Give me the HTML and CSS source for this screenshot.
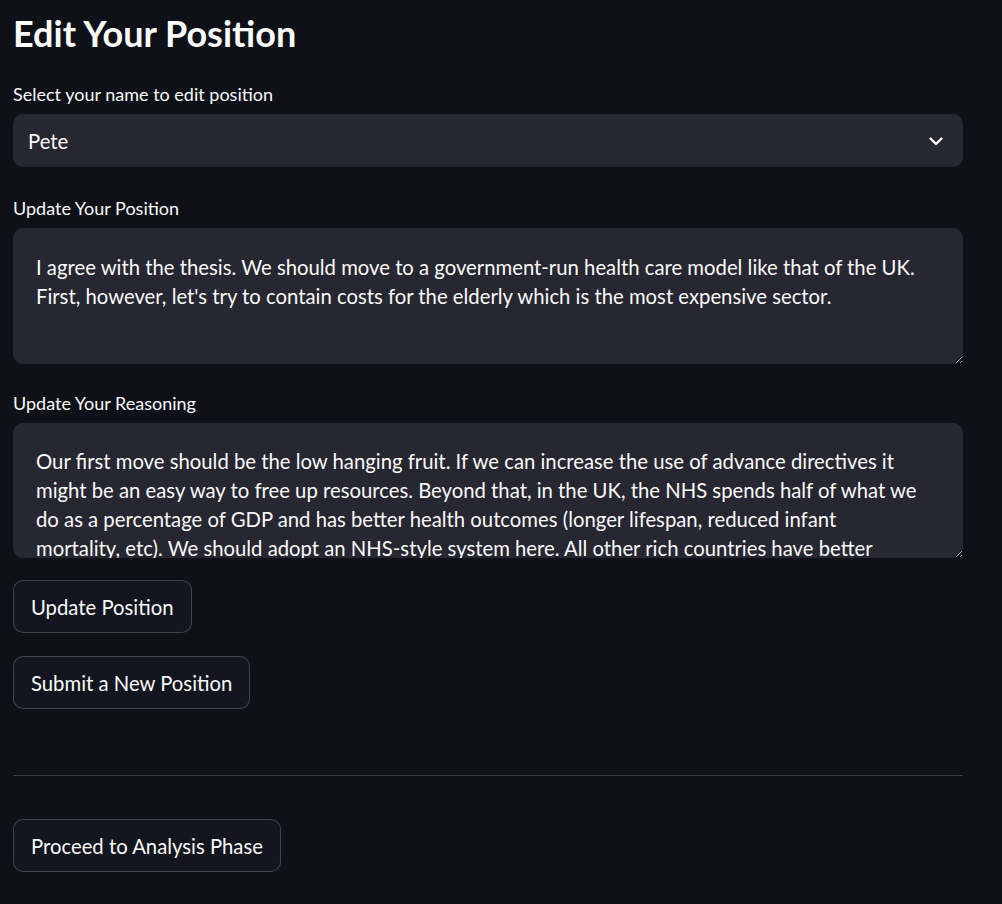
FILE: index.html
```html
<!DOCTYPE html>
<html lang="en">
<head>
<meta charset="utf-8">
<title>Edit Your Position</title>
<link rel="stylesheet" href="styles.css">
</head>
<body>
<main class="main">
  <h1 class="title">Edit Your Position</h1>

  <div class="field field-first">
    <label class="label">Select your name to edit position</label>
    <div class="select">
      <span class="select-value">Pete</span>
      <svg class="chevron" width="16" height="16" viewBox="0 0 16 16" aria-hidden="true">
        <path d="M2.5 5.5 L8 11 L13.5 5.5" fill="none" stroke="#fafafa" stroke-width="2.4" stroke-linecap="round" stroke-linejoin="round"/>
      </svg>
    </div>
  </div>

  <div class="field field-position">
    <label class="label">Update Your Position</label>
    <textarea class="textarea ta-position" readonly>I agree with the thesis. We should move to a government-run health care model like that of the UK. First, however, let's try to contain costs for the elderly which is the most expensive sector.</textarea>
  </div>

  <div class="field field-reasoning">
    <label class="label">Update Your Reasoning</label>
    <textarea class="textarea ta-reasoning" readonly>Our first move should be the low hanging fruit. If we can increase the use of advance directives it might be an easy way to free up resources. Beyond that, in the UK, the NHS spends half of what we do as a percentage of GDP and has better health outcomes (longer lifespan, reduced infant mortality, etc). We should adopt an NHS-style system here. All other rich countries have better health outcomes than we do at a lower cost.</textarea>
  </div>

  <button class="btn btn-first">Update Position</button>
  <button class="btn btn-second">Submit a New Position</button>

  <hr class="divider">

  <button class="btn btn-proceed">Proceed to Analysis Phase</button>
</main>
</body>
</html>
```

FILE: styles.css
```css
html, body {
  margin: 0;
  padding: 0;
  background: #0e1117;
  color: #fafafa;
  font-family: Lato, "Noto Sans", sans-serif;
}

.main {
  width: 950px;
  padding: 10px 0 0 13px;
  display: flex;
  flex-direction: column;
  align-items: flex-start;
}

.title {
  margin: 0;
  font-size: 36px;
  font-weight: 700;
  line-height: 46px;
}

.field {
  width: 100%;
  display: flex;
  flex-direction: column;
}

.field-first {
  margin-top: 27px;
}

.field-position {
  margin-top: 30px;
}

.field-reasoning {
  margin-top: 28px;
}

.label {
  font-size: 18px;
  line-height: 22px;
  margin-bottom: 9px;
}

.select {
  box-sizing: border-box;
  height: 53px;
  background: #262730;
  border-radius: 10px;
  display: flex;
  align-items: center;
  justify-content: space-between;
  padding: 0 19px 0 15px;
  font-size: 20.3px;
}

.chevron {
  display: block;
}

.textarea {
  box-sizing: border-box;
  width: 100%;
  background: #262730;
  color: #fafafa;
  border: none;
  outline: none;
  border-radius: 10px;
  font-family: inherit;
  font-size: 20.3px;
  line-height: 29px;
  padding: 25px 42px 0 23px;
  resize: vertical;
  overflow: hidden;
  margin: 0;
  display: block;
}

.ta-position {
  height: 136px;
}

.ta-reasoning {
  height: 135px;
  padding-top: 24px;
}

.btn {
  box-sizing: border-box;
  height: 53px;
  padding: 0 17px;
  background: #13161e;
  color: #fafafa;
  border: 1px solid rgba(250, 250, 250, 0.2);
  border-radius: 10px;
  font-family: inherit;
  font-size: 20.3px;
  cursor: pointer;
}

.btn-first {
  margin-top: 22px;
}

.btn-second {
  margin-top: 23px;
}

.divider {
  box-sizing: border-box;
  width: 100%;
  margin: 66px 0 0 0;
  border: none;
  border-top: 1px solid rgba(250, 250, 250, 0.2);
  height: 0;
}

.btn-proceed {
  margin-top: 43px;
}
```
